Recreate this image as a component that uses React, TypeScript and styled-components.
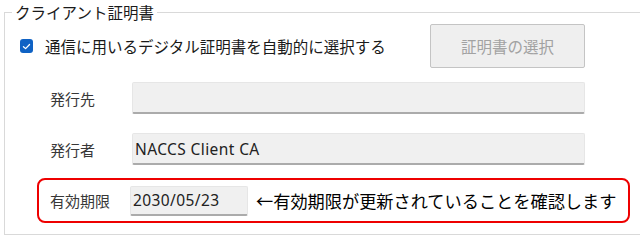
import * as React from "react";
import styled, { createGlobalStyle } from "styled-components";

const GlobalStyle = createGlobalStyle`
  html, body {
    margin: 0;
    padding: 0;
    background: #ffffff;
    overflow: hidden;
  }
  body {
    font-family: "Noto Sans CJK JP", "Noto Sans", sans-serif;
    color: #1a1a1a;
  }
`;

export default function App() {
    return (
        <>
            <GlobalStyle />
            <Panel>
                <Title>クライアント証明書</Title>

                <CheckRow>
                    <CheckLabel>
                        <CheckBox>
                            <svg width="9" height="9" viewBox="0 0 10 10">
                                <path d="M1.6 5.2 L4 7.4 L8.4 2.8" fill="none" stroke="#ffffff" strokeWidth="1.4" strokeLinecap="round" strokeLinejoin="round" />
                            </svg>
                        </CheckBox>
                        通信に用いるデジタル証明書を自動的に選択する
                    </CheckLabel>
                    <div style={{ flex: 1 }} />
                    <SelectButton disabled>証明書の選択</SelectButton>
                </CheckRow>

                <FieldRow top={14}>
                    <Label width={82}>発行先</Label>
                    <Field width={453} />
                </FieldRow>

                <FieldRow top={19}>
                    <Label width={82}>発行者</Label>
                    <Field width={453}>NACCS Client CA</Field>
                </FieldRow>

                <Highlight>
                    <Label width={80}>有効期限</Label>
                    <Field width={118} tall={30}>2030/05/23</Field>
                    <Note>←有効期限が更新されていることを確認します</Note>
                </Highlight>
            </Panel>
        </>
    );
}

const Panel = styled.div`
    position: relative;
    margin: 12px 0 0 4px;
    width: 660px;
    height: 221px;
    border: 1px solid #d9d9d9;
    display: flex;
    flex-direction: column;
`

const Title = styled.div`
    position: absolute;
    top: -10px;
    left: 7px;
    padding: 0 3px;
    background: #ffffff;
    font-size: 15.5px;
    line-height: 18px;
    color: #1a1a1a;
`

const CheckRow = styled.div`
    box-sizing: border-box;
    display: flex;
    flex-direction: row;
    align-items: center;
    height: 44px;
    margin-top: 11px;
    padding-left: 15px;
    width: 580px;
`

const CheckLabel = styled.label`
    display: flex;
    align-items: center;
    gap: 12px;
    font-size: 15.5px;
    color: #1a1a1a;
`

const CheckBox = styled.span`
    display: inline-flex;
    align-items: center;
    justify-content: center;
    width: 13px;
    height: 14px;
    border-radius: 3px;
    background: #0f62c4;
`

const SelectButton = styled.button`
    width: 155px;
    height: 44px;
    background: #efefef;
    border: 1px solid #c4c4c4;
    border-radius: 2px;
    font-family: "Noto Sans CJK JP", sans-serif;
    font-size: 15.5px;
    color: #a2a2a2;
    padding: 0;
`

const FieldRow = styled.div<{ top: number }>`
    display: flex;
    flex-direction: row;
    align-items: center;
    margin-top: ${props => props.top}px;
    padding-left: 45px;
`

const Label = styled.div<{ width: number }>`
    width: ${props => props.width}px;
    font-size: 15px;
    color: #383838;
`

const Field = styled.div<{ width: number, tall?: number }>`
    box-sizing: border-box;
    width: ${props => props.width}px;
    height: ${props => props.tall ?? 32}px;
    background: #f0f0f0;
    border: 1px solid #e6e6e6;
    border-bottom: 2px solid #ababab;
    border-radius: 2px;
    display: flex;
    align-items: center;
    padding-left: 2px;
    font-family: "Noto Sans", "Noto Sans CJK JP", sans-serif;
    font-size: 15.5px;
    letter-spacing: 0.4px;
    color: #222222;
`

const Highlight = styled.div`
    box-sizing: border-box;
    display: flex;
    flex-direction: row;
    align-items: center;
    margin: 13px 0 0 32px;
    width: 593px;
    height: 45px;
    border: 2px solid #ee0000;
    border-radius: 8px;
    padding-left: 11px;
`

const Note = styled.div`
    margin-left: 8px;
    font-size: 17.2px;
    font-weight: 400;
    color: #000000;
    white-space: nowrap;
`
